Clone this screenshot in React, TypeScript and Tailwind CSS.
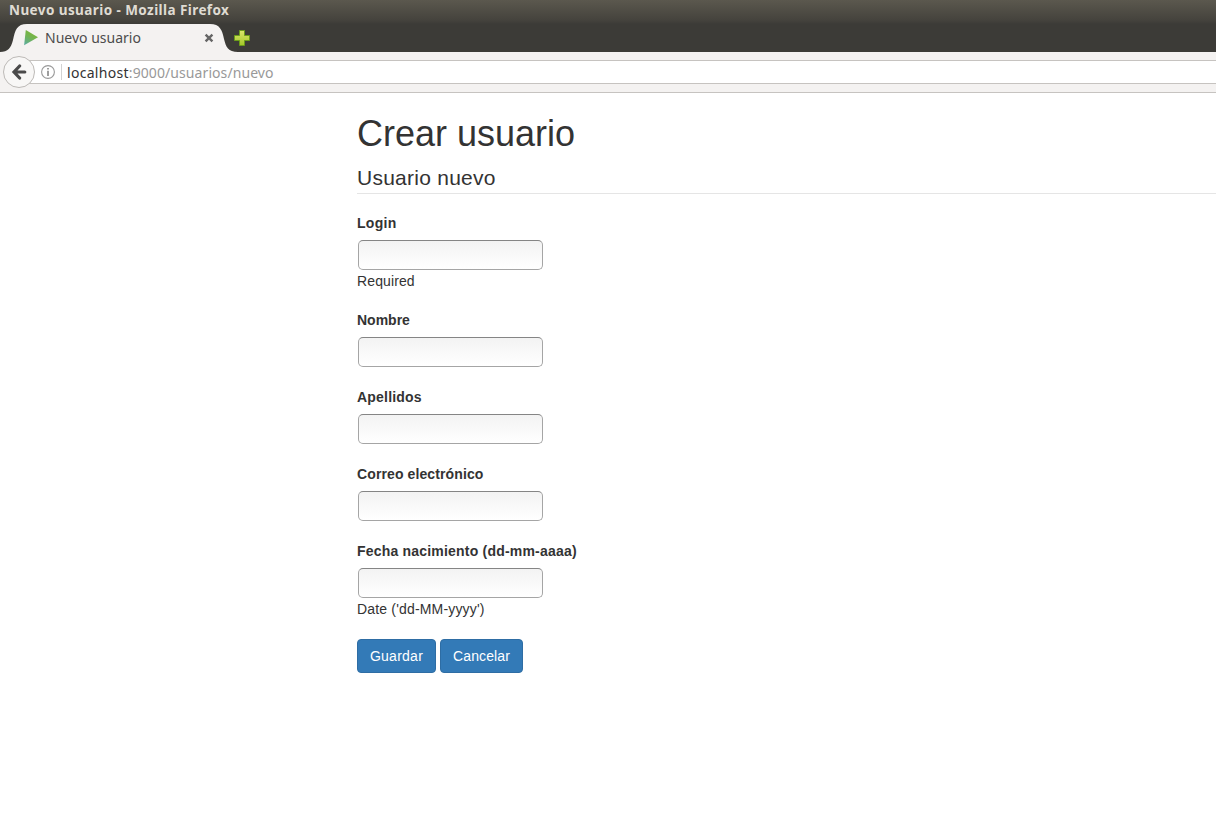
const fields = [
  { label: "Login", tracking: "tracking-[0.3px]", help: "Required", helpTracking: "tracking-[0.12px]" },
  { label: "Nombre", tracking: "tracking-[0px]" },
  { label: "Apellidos", tracking: "tracking-[0.2px]" },
  { label: "Correo electrónico", tracking: "tracking-[0.11px]" },
  {
    label: "Fecha nacimiento (dd-mm-aaaa)",
    tracking: "tracking-[0.2px]",
    help: "Date ('dd-MM-yyyy')",
    helpTracking: "tracking-[0.17px]",
  },
];

function PlayIcon() {
  return (
    <svg width="15" height="16" viewBox="0 0 15 16" className="shrink-0">
      <defs>
        <linearGradient id="play" x1="0.7" y1="0" x2="0.2" y2="1">
          <stop offset="0" stopColor="#7bb62f" />
          <stop offset="0.5" stopColor="#72b354" />
          <stop offset="1" stopColor="#5cac9b" />
        </linearGradient>
      </defs>
      <path d="M1.8 .1 L14 7.3 L.1 15.3 Z" fill="url(#play)" />
    </svg>
  );
}

function PlusIcon() {
  return (
    <svg width="16" height="16" viewBox="0 0 16 16" className="shrink-0">
      <defs>
        <linearGradient id="plus" x1="0" y1="0" x2="0" y2="1">
          <stop offset="0" stopColor="#dbe66b" />
          <stop offset="1" stopColor="#a3c728" />
        </linearGradient>
      </defs>
      <path
        d="M5.5 .5h5v5h5v5h-5v5h-5v-5h-5v-5h5z"
        fill="url(#plus)"
        stroke="#6b9b1a"
      />
    </svg>
  );
}

function TitleBar() {
  return (
    <div className="flex h-6 items-start pl-[9px]">
      <span className="whitespace-nowrap text-[13.5px] font-bold leading-[20px] tracking-[0.42px] text-[#dfdbd2]">
        Nuevo usuario - Mozilla Firefox
      </span>
    </div>
  );
}

function TabStrip() {
  return (
    <div className="flex h-7 items-center">
      <div className="relative flex h-7 w-[234px] items-center pl-6">
        <svg width="240" height="28" viewBox="0 0 240 28" className="absolute left-0 top-0">
          <path
            d="M0 28 C8 28 11 24 13 16 C15 6 17 0 27 0 H210 C220 0 222 6 224 15 C226 23 228 28 238 28 Z"
            fill="#f4f2f1"
          />
        </svg>
        <div className="relative flex w-full items-center">
          <PlayIcon />
          <span className="ml-1.5 whitespace-nowrap text-[14px] leading-[20px] text-[#4c4c4c]">
            Nuevo usuario
          </span>
          <svg width="10" height="10" viewBox="0 0 10 10" className="ml-auto mr-5">
            <path d="M1.6 1.6 L8.4 8.4 M8.4 1.6 L1.6 8.4" stroke="#666" strokeWidth="2.4" />
          </svg>
        </div>
      </div>
      <PlusIcon />
    </div>
  );
}

function NavBar() {
  return (
    <div className="flex h-[41px] items-center border-b border-[#c6c3c0] bg-[#f4f2f1] pl-[3px]">
      <div className="relative z-10 flex size-8 shrink-0 items-center justify-center rounded-full border border-[#bdbab7] bg-[#f8f7f6]">
        <svg width="16" height="16" viewBox="0 0 16 16">
          <path
            d="M8.6 2 L3 8 L8.6 14 M3.5 8 H13.8"
            fill="none"
            stroke="#4b4b4b"
            strokeWidth="3.2"
            strokeLinecap="round"
          />
        </svg>
      </div>
      <div className="-ml-2 flex h-6 grow items-center border-y border-[#c6c3c0] bg-white pl-[14px]">
        <svg width="14" height="14" viewBox="0 0 14 14" className="shrink-0">
          <circle cx="7" cy="7" r="6.4" fill="none" stroke="#999" strokeWidth="1.1" />
          <path d="M7 3V4.6M7 5.8V11" stroke="#858585" strokeWidth="1.6" />
        </svg>
        <div className="ml-1.5 h-4 w-px bg-[#d2d2d2]" />
        <span className="ml-[5px] whitespace-nowrap pt-0.5 text-[14px] leading-[20px] text-[#999]">
          <span className="tracking-[0.3px] text-[#333]">localhost</span>
          <span className="tracking-[0.08px]">:9000/usuarios/nuevo</span>
        </span>
      </div>
    </div>
  );
}

export default function App() {
  return (
    <div className="h-[818px] w-full overflow-hidden bg-white">
      <header className="font-['Noto_Sans',sans-serif]">
        <div className="bg-[linear-gradient(#5b584e_0px,#45433d_20px,#3c3b37_24px,#3c3b37_52px)]">
          <TitleBar />
          <TabStrip />
        </div>
        <NavBar />
      </header>
      <main className="pl-[357px] pt-[21px] font-['Liberation_Sans',Arial,sans-serif] text-[14px] leading-5 text-[#333]">
        <h1 className="text-[36px] leading-[40px]">Crear usuario</h1>
        <form>
          <h2 className="mt-[9px] h-[31px] border-b border-[#e5e5e5] text-[21px] leading-[30px] tracking-[0.25px]">
            Usuario nuevo
          </h2>
          <div className="mt-[19px] flex flex-col items-start">
            {fields.map((f) => (
              <div key={f.label} className="mb-[19px] flex flex-col items-start">
                <label className={`whitespace-nowrap font-bold ${f.tracking}`}>{f.label}</label>
                <input
                  aria-label={f.label}
                  className="mb-px ml-px mt-[7px] h-[30px] w-[185px] rounded-[5px] border border-[#a5a5a5] border-t-[#858585] bg-linear-to-b from-[#f3f3f3] to-white px-1 outline-none"
                />
                {f.help && <span className={f.helpTracking}>{f.help}</span>}
              </div>
            ))}
          </div>
          <div className="mt-px flex gap-1">
            <button type="button" className="h-[34px] w-[79px] rounded-[4px] border border-[#2e6da4] bg-[#337ab7] tracking-[0.25px] text-white">
              Guardar
            </button>
            <button type="button" className="h-[34px] w-[83px] rounded-[4px] border border-[#2e6da4] bg-[#337ab7] tracking-[0.12px] text-white">
              Cancelar
            </button>
          </div>
        </form>
      </main>
    </div>
  );
}
